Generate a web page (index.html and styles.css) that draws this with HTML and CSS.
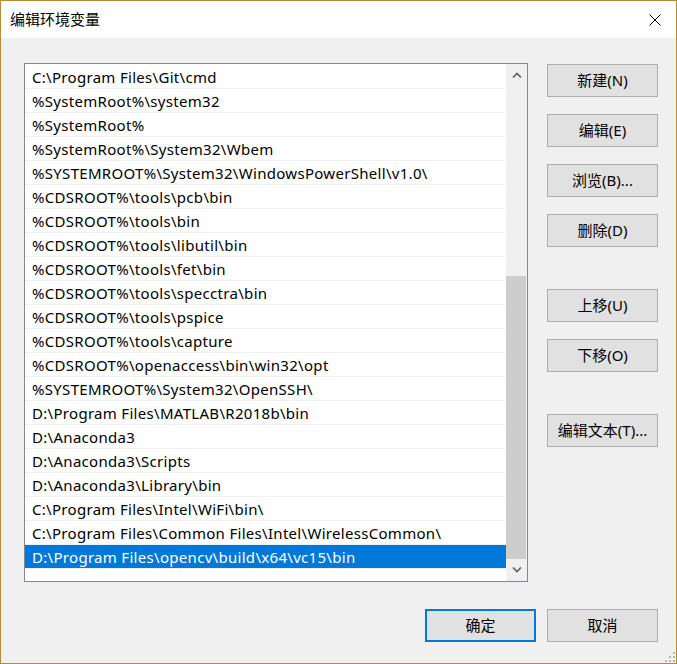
FILE: index.html
```html
<!DOCTYPE html>
<html lang="zh-CN">
<head>
  <meta charset="UTF-8" />
  <title>编辑环境变量</title>
  <link rel="stylesheet" href="styles.css">
</head>
<body>

  <div class="window">
    <div class="titlebar">
      <span class="title">编辑环境变量</span>
      <svg class="close" width="12" height="12" viewBox="0 0 12 12">
        <path d="M0.5 0.5 L11.5 11.5 M11.5 0.5 L0.5 11.5" stroke="#000" stroke-width="1" fill="none" />
      </svg>
    </div>

    <div class="content">
      <div class="main">
        <!-- 路径列表 -->
        <div class="listbox">
          <div class="rows">
            <div class="row">C:\Program Files\Git\cmd</div>
            <div class="row">%SystemRoot%\system32</div>
            <div class="row">%SystemRoot%</div>
            <div class="row">%SystemRoot%\System32\Wbem</div>
            <div class="row">%SYSTEMROOT%\System32\WindowsPowerShell\v1.0\</div>
            <div class="row">%CDSROOT%\tools\pcb\bin</div>
            <div class="row">%CDSROOT%\tools\bin</div>
            <div class="row">%CDSROOT%\tools\libutil\bin</div>
            <div class="row">%CDSROOT%\tools\fet\bin</div>
            <div class="row">%CDSROOT%\tools\specctra\bin</div>
            <div class="row">%CDSROOT%\tools\pspice</div>
            <div class="row">%CDSROOT%\tools\capture</div>
            <div class="row">%CDSROOT%\openaccess\bin\win32\opt</div>
            <div class="row">%SYSTEMROOT%\System32\OpenSSH\</div>
            <div class="row">D:\Program Files\MATLAB\R2018b\bin</div>
            <div class="row">D:\Anaconda3</div>
            <div class="row">D:\Anaconda3\Scripts</div>
            <div class="row">D:\Anaconda3\Library\bin</div>
            <div class="row">C:\Program Files\Intel\WiFi\bin\</div>
            <div class="row">C:\Program Files\Common Files\Intel\WirelessCommon\</div>
            <div class="row selected">D:\Program Files\opencv\build\x64\vc15\bin</div>
          </div>

          <div class="scrollbar">
            <div class="arrow">
              <svg width="10" height="6" viewBox="0 0 10 6">
                <path d="M1 5.5 L5 1.5 L9 5.5" stroke="#606060" stroke-width="1.6" fill="none" />
              </svg>
            </div>
            <div class="track">
              <div class="thumb"></div>
            </div>
            <div class="arrow">
              <svg width="10" height="6" viewBox="0 0 10 6">
                <path d="M1 0.5 L5 4.5 L9 0.5" stroke="#606060" stroke-width="1.6" fill="none" />
              </svg>
            </div>
          </div>
        </div>

        <!-- 右侧按钮 -->
        <div class="side-buttons">
          <button class="btn">新建(N)</button>
          <button class="btn">编辑(E)</button>
          <button class="btn">浏览(B)...</button>
          <button class="btn">删除(D)</button>
          <button class="btn group-gap">上移(U)</button>
          <button class="btn">下移(O)</button>
          <button class="btn group-gap">编辑文本(T)...</button>
        </div>
      </div>

      <div class="footer">
        <button class="btn default">确定</button>
        <button class="btn">取消</button>
      </div>
    </div>

    <svg class="grip" width="12" height="12" viewBox="0 0 12 12">
      <rect x="9" y="1" width="2" height="2" fill="#b8b8b8" />
      <rect x="5" y="5" width="2" height="2" fill="#b8b8b8" />
      <rect x="9" y="5" width="2" height="2" fill="#b8b8b8" />
      <rect x="1" y="9" width="2" height="2" fill="#b8b8b8" />
      <rect x="5" y="9" width="2" height="2" fill="#b8b8b8" />
      <rect x="9" y="9" width="2" height="2" fill="#b8b8b8" />
    </svg>
  </div>

</body>
</html>
```

FILE: styles.css
```css
body {
  margin: 0;
  font-family: "Noto Sans", "Noto Sans CJK SC", sans-serif;
  font-size: 15px;
  color: #000;
  background: #f0f0f0;
}

.window {
  position: relative;
  width: 677px;
  height: 664px;
  box-sizing: border-box;
  border: 1px solid #b98a35;
  background: #f0f0f0;
}

.titlebar {
  height: 37px;
  background: #fff;
  display: flex;
  align-items: center;
  justify-content: space-between;
  padding: 0 15px 2px 9px;
  box-sizing: border-box;
}

.title {
  font-family: "Noto Sans CJK SC", sans-serif;
  font-size: 15px;
  line-height: 20px;
}

.close {
  display: block;
  margin-top: 2px;
}

.content {
  padding: 25px 18px 0 23px;
}

.main {
  display: flex;
  align-items: flex-start;
}

/* list */
.listbox {
  width: 504px;
  height: 519px;
  box-sizing: border-box;
  border: 1px solid #828790;
  background: #fff;
  display: flex;
}

.rows {
  flex: 1;
  padding-top: 1px;
}

.row {
  height: 23px;
  line-height: 25px;
  border-bottom: 1px solid #f0f0f0;
  padding-left: 7px;
  letter-spacing: 0.3px;
  white-space: nowrap;
  overflow: hidden;
}

.row.selected {
  background: #0078d7;
  color: #fff;
}

.scrollbar {
  width: 21px;
  background: #f0f0f0;
  display: flex;
  flex-direction: column;
}

.arrow {
  height: 22px;
  display: flex;
  align-items: center;
  justify-content: center;
}

.arrow svg {
  display: block;
}

.track {
  flex: 1;
}

.thumb {
  margin-top: 190px;
  width: 20px;
  height: 283px;
  background: #cdcdcd;
}

/* buttons */
.side-buttons {
  margin-left: 19px;
  margin-top: 1px;
  display: flex;
  flex-direction: column;
  gap: 17px;
}

.btn {
  width: 111px;
  height: 33px;
  box-sizing: border-box;
  border: 1px solid #adadad;
  background: #e1e1e1;
  font-family: "Noto Sans", "Noto Sans CJK SC", sans-serif;
  font-size: 15px;
  color: #000;
  padding: 0 0 2px;
}

.btn.group-gap {
  margin-top: 25px;
}

.btn.default {
  border: 2px solid #0078d7;
}

.footer {
  margin-top: 27px;
  display: flex;
  justify-content: flex-end;
  gap: 11px;
}

.grip {
  position: absolute;
  right: 0;
  bottom: 0;
}
```
